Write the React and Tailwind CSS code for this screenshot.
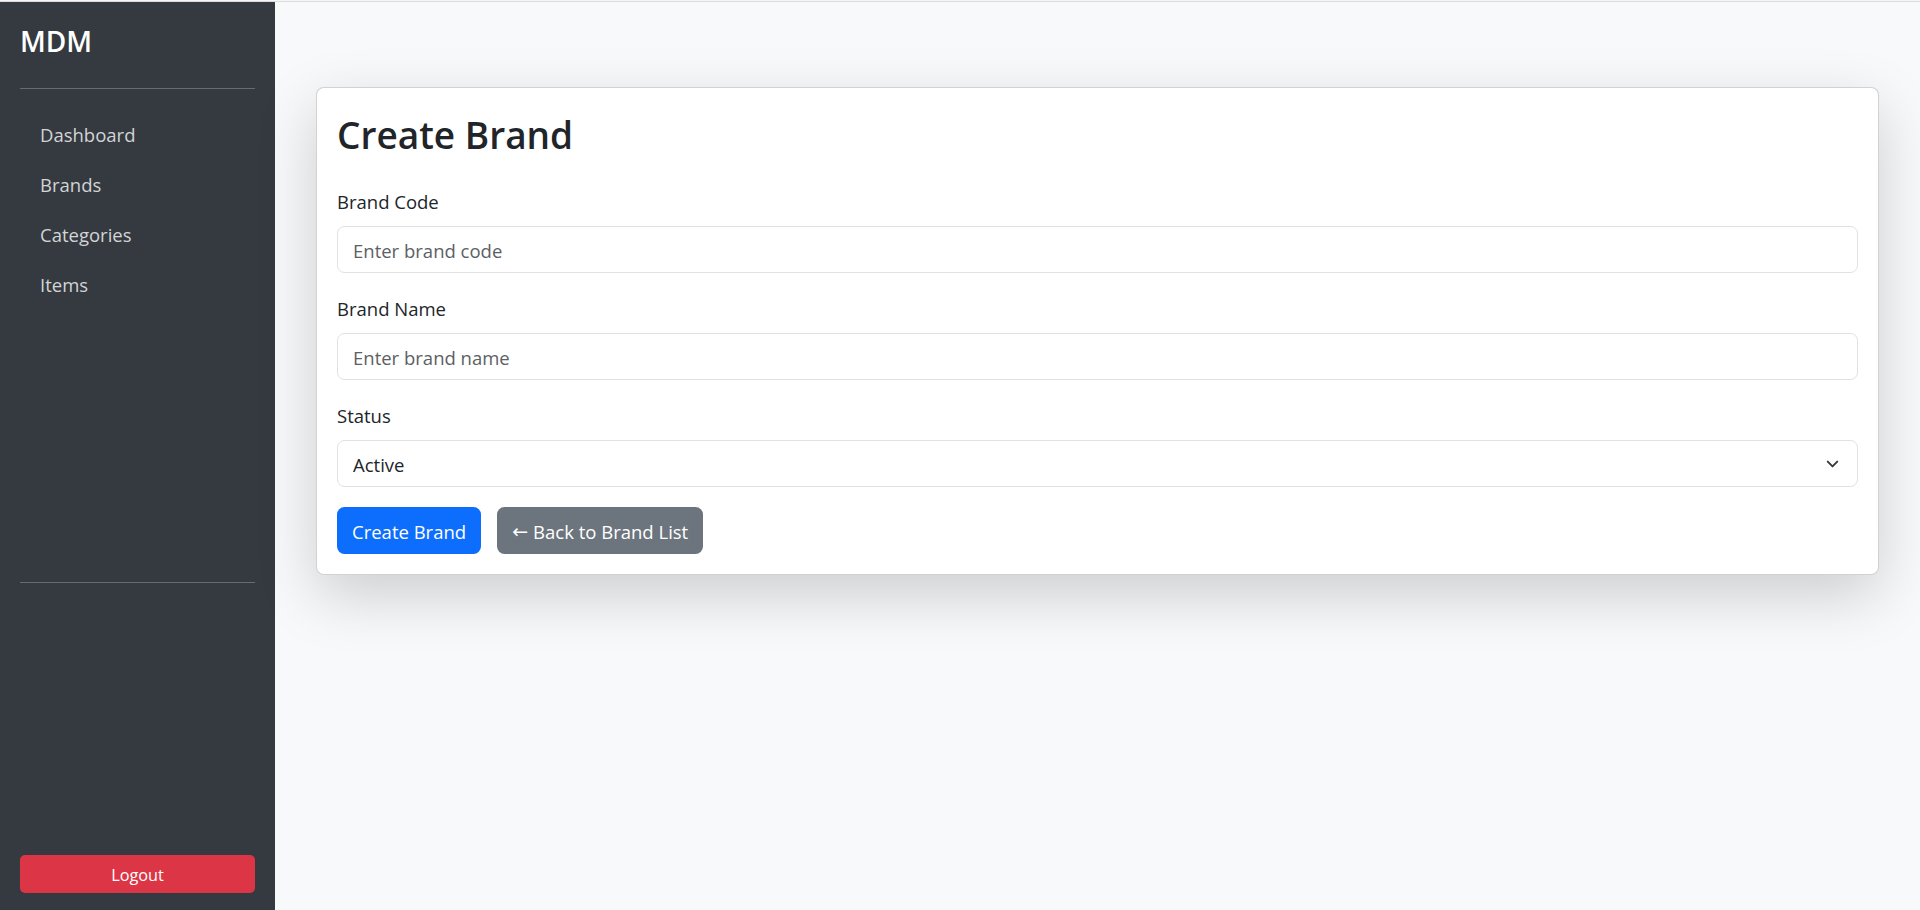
import { ChevronDown } from "lucide-react"

const font = { fontFamily: '"Open Sans", "Noto Sans", sans-serif' }

function Sidebar() {
  const links = ["Dashboard", "Brands", "Categories", "Items"]
  return (
    <aside className="w-[275px] shrink-0 bg-[#343a40] px-[20px] flex flex-col text-white">
      <h4 className="pt-[21px] text-[28px] leading-[36px] font-semibold m-0">MDM</h4>
      <hr className="mt-[29px] border-0 border-t border-white/25" />
      <ul className="mt-[21px] flex flex-col">
        {links.map((l) => (
          <li key={l}>
            <a href="#" className="block px-[20px] py-[10px] text-[18.5px] leading-[30px] text-[#d3d4d6]">
              {l}
            </a>
          </li>
        ))}
      </ul>
      <hr className="mt-[272px] border-0 border-t border-white/25" />
      <button className="mt-auto mb-[17px] h-[38px] pt-[1px] rounded-[5px] bg-[#dc3545] text-white text-[16.3px] leading-[26px]">
        Logout
      </button>
    </aside>
  )
}

function Field({ label, children }) {
  return (
    <div className="mb-[20px]">
      <label className="block pt-[1px] mb-[9px] text-[18.5px] leading-[30px] text-[#212529]">{label}</label>
      {children}
    </div>
  )
}

export default function App() {
  const inputCls =
    "w-full h-[47px] px-[15px] pt-[2px] border border-[#dee2e6] rounded-[7.5px] bg-white text-[18.5px] text-[#212529] placeholder:text-[#5c6064] outline-none"
  const btnCls = "h-[47px] px-[15px] pt-[2px] rounded-[7.5px] text-white text-[18.5px] flex items-center"
  return (
    <div className="h-[910px] flex flex-col overflow-hidden" style={font}>
      <div className="h-[2px] shrink-0 bg-[#f6f6f6] border-b border-[#dcdcdc]" />
      <div className="flex flex-1 min-h-0">
        <Sidebar />
        <main className="flex-1 bg-[#f8f9fa] pt-[85px] px-[41px]">
          <div className="bg-white border border-black/[0.175] rounded-[8px] p-[20px] shadow-[0_20px_60px_rgba(0,0,0,0.175)]">
            <h2 className="pt-[3px] text-[37px] leading-[48px] font-semibold text-[#212529] mb-[27px]">Create Brand</h2>
            <Field label="Brand Code">
              <input className={inputCls} placeholder="Enter brand code" />
            </Field>
            <Field label="Brand Name">
              <input className={inputCls} placeholder="Enter brand name" />
            </Field>
            <Field label="Status">
              <div className="relative">
                <select className={inputCls + " appearance-none"} defaultValue="Active">
                  <option>Active</option>
                  <option>Inactive</option>
                </select>
                <ChevronDown
                  className="absolute right-[16px] top-1/2 -translate-y-1/2 text-[#343a40] pointer-events-none"
                  size={19}
                  strokeWidth={2.4}
                />
              </div>
            </Field>
            <div className="flex gap-[16px]">
              <button className={btnCls + " bg-[#0d6efd]"}>Create Brand</button>
              <button className={btnCls + " bg-[#6c757d]"}>
                <span className="font-['DejaVu_Sans',sans-serif] text-[19px] leading-none mr-[5px]">←</span>
                Back to Brand List
              </button>
            </div>
          </div>
        </main>
      </div>
    </div>
  )
}
